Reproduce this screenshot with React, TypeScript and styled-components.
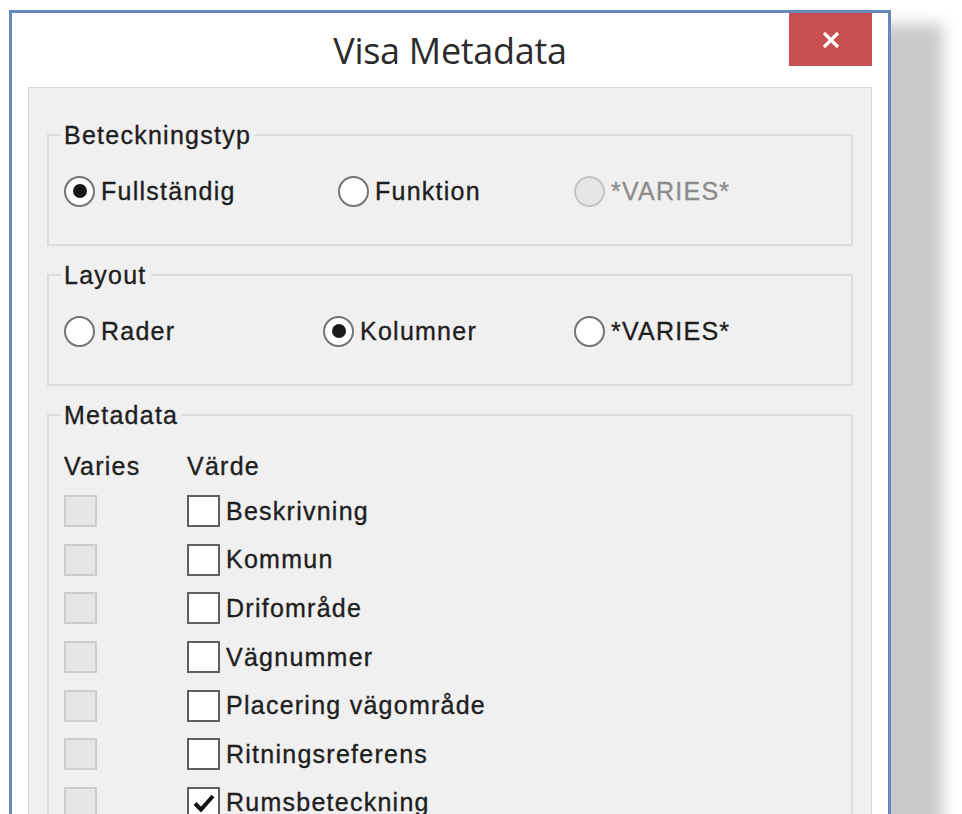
import React from "react";
import styled, { createGlobalStyle } from "styled-components";

const GlobalStyle = createGlobalStyle`
  html, body {
    margin: 0;
    padding: 0;
    background: #ffffff;
    overflow: hidden;
  }
  body {
    font-family: "Liberation Sans", Arial, sans-serif;
  }
`;

const Page = styled.div`
  width: 962px;
  height: 814px;
  padding: 10px 0 0 9px;
  box-sizing: border-box;
  overflow: hidden;
`;

const Window = styled.div`
  width: 882px;
  height: 900px;
  box-sizing: border-box;
  border: 3px solid #6689bb;
  background: #ffffff;
  box-shadow: 52px 14px 14px rgba(0, 0, 0, 0.21);
  display: flex;
  flex-direction: column;
`;

const TitleBar = styled.div`
  height: 74px;
  display: grid;
  grid-template-columns: 1fr auto 1fr;
  padding: 0 16px;
  flex-shrink: 0;
`;

const Title = styled.div`
  grid-column: 2;
  font-family: "Open Sans", "Noto Sans", sans-serif;
  font-size: 36px;
  color: #2b2b2b;
  line-height: 74px;
  margin-top: 1px;
  letter-spacing: -0.3px;
`;

const CloseButton = styled.button`
  grid-column: 3;
  justify-self: end;
  align-self: start;
  width: 83px;
  height: 53px;
  border: none;
  margin: 0;
  padding: 0;
  background: #c74f4f;
  display: flex;
  align-items: center;
  justify-content: center;
`;

const Panel = styled.div`
  flex: 1;
  margin: 0 16px;
  background: #f0f0f0;
  border: 1px solid #d9d9d9;
  padding: 32px 18px 0 18px;
  display: flex;
  flex-direction: column;
  gap: 14px;
`;

const Group = styled.fieldset`
  margin: 0;
  border: 2px solid #dcdcdc;
  padding: 21px 15px 33px 15px;
  min-width: 0;
`;

const textStyle = `
  font-family: "Liberation Sans", Arial, sans-serif;
  font-size: 25px;
  letter-spacing: 1.25px;
  -webkit-text-stroke: 0.35px currentColor;
`;

const Legend = styled.legend`
  ${textStyle}
  color: #1e1e1e;
  line-height: 30px;
  padding: 0 4px 0 3px;
  margin-left: -3px;
`;

const RadioRow = styled.div<{ $cols: string }>`
  display: grid;
  grid-template-columns: ${(p) => p.$cols};
  height: 40px;
  align-items: center;
`;

const Option = styled.label<{ $disabled?: boolean }>`
  ${textStyle}
  display: flex;
  align-items: center;
  gap: 6px;
  color: ${(p) => (p.$disabled ? "#8c8c8c" : "#1e1e1e")};
`;

const RadioCircle = styled.span<{ $disabled?: boolean }>`
  width: 31px;
  height: 31px;
  box-sizing: border-box;
  border-radius: 50%;
  border: 2px solid ${(p) => (p.$disabled ? "#c4c4c4" : "#747474")};
  background: ${(p) => (p.$disabled ? "#e6e6e6" : "#ffffff")};
  display: flex;
  align-items: center;
  justify-content: center;
  flex-shrink: 0;
  -webkit-text-stroke: 0;
`;

const RadioDot = styled.span`
  width: 14px;
  height: 14px;
  border-radius: 50%;
  background: #1a1a1a;
`;

const MetaGrid = styled.div`
  display: grid;
  grid-template-columns: 123px 1fr;
  grid-template-rows: 36px;
  grid-auto-rows: 48.6px;
  align-items: center;
`;

const HeaderCell = styled.div`
  ${textStyle}
  color: #1e1e1e;
  height: 30px;
  line-height: 30px;
  align-self: start;
`;

const CheckBox = styled.span<{ $disabled?: boolean }>`
  width: 33px;
  height: 32px;
  box-sizing: border-box;
  border: 2px solid ${(p) => (p.$disabled ? "#cdcdcd" : "#5f5f5f")};
  background: ${(p) => (p.$disabled ? "#e6e6e6" : "#ffffff")};
  display: flex;
  align-items: center;
  justify-content: center;
  flex-shrink: 0;
`;

const CheckLabel = styled.label`
  ${textStyle}
  display: flex;
  align-items: center;
  gap: 6px;
  color: #1e1e1e;
`;

const Radio = ({ label, checked, disabled }: { label: string; checked?: boolean; disabled?: boolean }) => (
  <Option $disabled={disabled}>
    <RadioCircle $disabled={disabled}>{checked && <RadioDot />}</RadioCircle>
    {label}
  </Option>
);

const items: { label: string; checked?: boolean }[] = [
  { label: "Beskrivning" },
  { label: "Kommun" },
  { label: "Drifområde" },
  { label: "Vägnummer" },
  { label: "Placering vägområde" },
  { label: "Ritningsreferens" },
  { label: "Rumsbeteckning", checked: true },
];

export default function App() {
  return (
    <>
      <GlobalStyle />
      <Page>
        <Window>
          <TitleBar>
            <Title>Visa Metadata</Title>
            <CloseButton aria-label="Stäng">
              <svg width="20" height="18" viewBox="0 0 20 18">
                <path d="M3 2 L17 16 M17 2 L3 16" stroke="#ffffff" strokeWidth="3.2" strokeLinecap="butt" />
              </svg>
            </CloseButton>
          </TitleBar>
          <Panel>
            <Group>
              <Legend>Beteckningstyp</Legend>
              <RadioRow $cols="274px 236px auto">
                <Radio label="Fullständig" checked />
                <Radio label="Funktion" />
                <Radio label="*VARIES*" disabled />
              </RadioRow>
            </Group>
            <Group>
              <Legend>Layout</Legend>
              <RadioRow $cols="259px 251px auto">
                <Radio label="Rader" />
                <Radio label="Kolumner" checked />
                <Radio label="*VARIES*" />
              </RadioRow>
            </Group>
            <Group>
              <Legend>Metadata</Legend>
              <MetaGrid>
                <HeaderCell>Varies</HeaderCell>
                <HeaderCell>Värde</HeaderCell>
                {items.map((it) => (
                  <React.Fragment key={it.label}>
                    <CheckBox $disabled />
                    <CheckLabel>
                      <CheckBox>
                        {it.checked && (
                          <svg width="24" height="22" viewBox="0 0 24 22">
                            <path d="M3 11.5 L9 17.5 L21 4" fill="none" stroke="#111111" strokeWidth="4" />
                          </svg>
                        )}
                      </CheckBox>
                      {it.label}
                    </CheckLabel>
                  </React.Fragment>
                ))}
              </MetaGrid>
            </Group>
          </Panel>
        </Window>
      </Page>
    </>
  );
}
